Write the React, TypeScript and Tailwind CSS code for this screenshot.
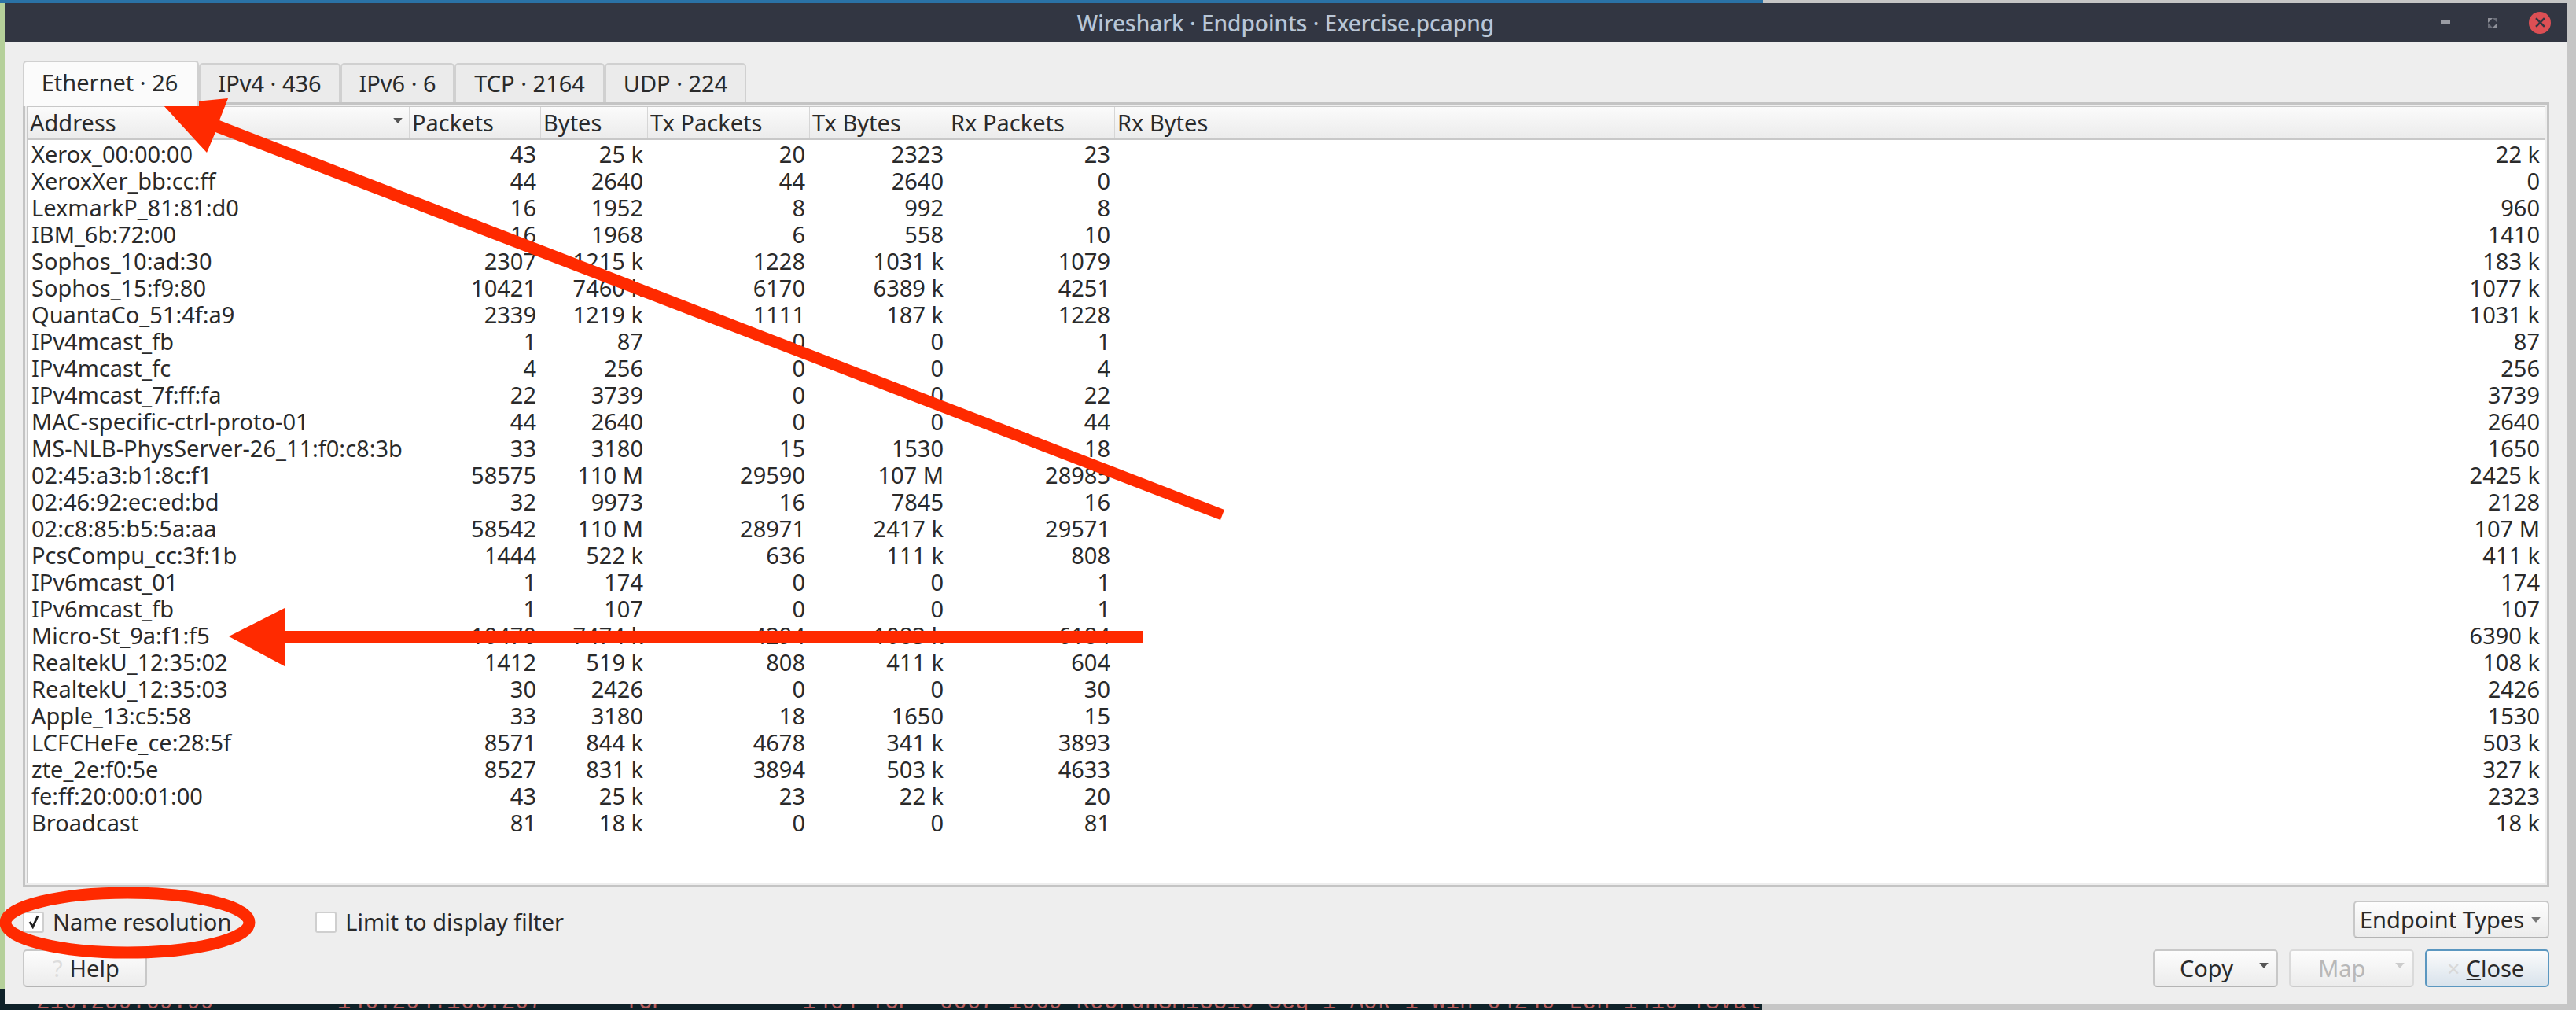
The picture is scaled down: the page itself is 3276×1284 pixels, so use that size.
import React from 'react';

const FONT = "font-['Noto_Sans','Open_Sans',sans-serif]";

type Row = [string, string, string, string, string, string, string];

const rows: Row[] = [
  ['Xerox_00:00:00', '43', '25 k', '20', '2323', '23', '22 k'],
  ['XeroxXer_bb:cc:ff', '44', '2640', '44', '2640', '0', '0'],
  ['LexmarkP_81:81:d0', '16', '1952', '8', '992', '8', '960'],
  ['IBM_6b:72:00', '16', '1968', '6', '558', '10', '1410'],
  ['Sophos_10:ad:30', '2307', '1215 k', '1228', '1031 k', '1079', '183 k'],
  ['Sophos_15:f9:80', '10421', '7460 k', '6170', '6389 k', '4251', '1077 k'],
  ['QuantaCo_51:4f:a9', '2339', '1219 k', '1111', '187 k', '1228', '1031 k'],
  ['IPv4mcast_fb', '1', '87', '0', '0', '1', '87'],
  ['IPv4mcast_fc', '4', '256', '0', '0', '4', '256'],
  ['IPv4mcast_7f:ff:fa', '22', '3739', '0', '0', '22', '3739'],
  ['MAC-specific-ctrl-proto-01', '44', '2640', '0', '0', '44', '2640'],
  ['MS-NLB-PhysServer-26_11:f0:c8:3b', '33', '3180', '15', '1530', '18', '1650'],
  ['02:45:a3:b1:8c:f1', '58575', '110 M', '29590', '107 M', '28985', '2425 k'],
  ['02:46:92:ec:ed:bd', '32', '9973', '16', '7845', '16', '2128'],
  ['02:c8:85:b5:5a:aa', '58542', '110 M', '28971', '2417 k', '29571', '107 M'],
  ['PcsCompu_cc:3f:1b', '1444', '522 k', '636', '111 k', '808', '411 k'],
  ['IPv6mcast_01', '1', '174', '0', '0', '1', '174'],
  ['IPv6mcast_fb', '1', '107', '0', '0', '1', '107'],
  ['Micro-St_9a:f1:f5', '10470', '7474 k', '4294', '1083 k', '6184', '6390 k'],
  ['RealtekU_12:35:02', '1412', '519 k', '808', '411 k', '604', '108 k'],
  ['RealtekU_12:35:03', '30', '2426', '0', '0', '30', '2426'],
  ['Apple_13:c5:58', '33', '3180', '18', '1650', '15', '1530'],
  ['LCFCHeFe_ce:28:5f', '8571', '844 k', '4678', '341 k', '3893', '503 k'],
  ['zte_2e:f0:5e', '8527', '831 k', '3894', '503 k', '4633', '327 k'],
  ['fe:ff:20:00:01:00', '43', '25 k', '23', '22 k', '20', '2323'],
  ['Broadcast', '81', '18 k', '0', '0', '81', '18 k'],
];

const headers = ['Address', 'Packets', 'Bytes', 'Tx Packets', 'Tx Bytes', 'Rx Packets', 'Rx Bytes'];
const COLS = 'grid grid-cols-[486px_167px_136px_206px_176px_212px_1fr]';
const tabs = [
  { label: 'Ethernet · 26', w: 'w-[224px]' },
  { label: 'IPv4 · 436', w: 'w-[180px]' },
  { label: 'IPv6 · 6', w: 'w-[145px]' },
  { label: 'TCP · 2164', w: 'w-[191px]' },
  { label: 'UDP · 224', w: 'w-[180px]' },
];

const Caret = ({ className = '' }: { className?: string }) => (
  <svg viewBox="0 0 10 6" className={`w-[12px] h-[7px] ${className}`} fill="currentColor">
    <path d="M0 0h10L5 6z" />
  </svg>
);

const btn =
  'h-[48px] rounded-[5px] border-2 border-[#c8c8c8] border-b-[#b4b4b4] bg-gradient-to-b from-[#fdfdfd] to-[#ececec] flex items-center';

export default function App() {
  return (
    <div className={`relative w-[3276px] h-[1284px] overflow-hidden bg-[#c6c6c6] text-[29px] leading-[34px] text-[#2a2a2a] ${FONT}`}>
      {/* desktop behind the dialog */}
      <div className="absolute left-0 top-0 w-[2242px] h-[4px] bg-[#2a72a6]" />
      <div className="absolute left-0 top-[4px] w-[6px] h-[1253px] bg-[#b5d09a]" />
      <div className="absolute left-0 top-[1257px] bottom-0 w-[2241px] overflow-hidden bg-[#0f2229] pl-[46px] pt-[1px] whitespace-pre text-[#b85f5f] font-['Liberation_Mono',monospace]">
        {'216.289.69.99         146.204.166.207      TCP          1464 TCP  6667 1669 ReCrdnSM13310 Seq=1 Ack=1 Win=64240 Len=1410 TSval=3099 TSecr=6671 from, AGRT 6c6 1 AGK'}
      </div>

      {/* dialog */}
      <div className="relative left-[6px] top-[4px] w-[3258px] h-[1273px] flex flex-col bg-[#eeeeee]">
        <div className="relative h-[49px] shrink-0 flex items-center justify-center bg-[#323642] text-[#b9c6d6] text-[28px] font-medium">
          Wireshark · Endpoints · Exercise.pcapng
          <div className="absolute right-[20px] top-0 h-full flex items-center">
            <div className="w-[12px] h-[5px] bg-[#9a9ca4]" />
            <svg viewBox="0 0 12 12" className="w-[12px] h-[12px] ml-[48px]" fill="#8f9199">
              <path d="M0 0h6L0 6zM12 12H6l6-6z" />
              <path d="M12 0v6L6 0zM0 12V6l6 6z" fill="#6c6f79" />
            </svg>
            <div className="w-[28px] h-[28px] ml-[40px] rounded-full bg-[#dc4f54] flex items-center justify-center">
              <svg viewBox="0 0 12 12" className="w-[13px] h-[13px]" stroke="#323642" strokeWidth="2.4" fill="none">
                <path d="M1 1l10 10M11 1L1 11" />
              </svg>
            </div>
          </div>
        </div>

        <div className="flex-1 flex flex-col pl-[23px] pr-[22px] pt-[24px]">
          <div className="flex items-end h-[53px] shrink-0">
            {tabs.map((t, i) => (
              <div
                key={t.label}
                className={`${t.w} flex items-center justify-center rounded-t-[5px] border-2 border-b-0 border-[#d0d0d0] ${
                  i === 0 ? 'h-[58px] bg-[#fbfbfb] z-10 -mb-[5px] pb-[5px] pr-[3px]' : 'h-[50px] bg-[#ebebeb]'
                }`}
              >
                {t.label}
              </div>
            ))}
          </div>

          <div className="h-[998px] shrink-0 border-[3px] border-[#c4c4c4] p-[2px] bg-[#eeeeee] flex flex-col">
            <div className="flex-1 border border-[#c8c8c8] bg-white flex flex-col">
              <div className={`${COLS} h-[42px] shrink-0 bg-gradient-to-b from-[#fbfbfb] to-[#ececec] border-b-[3px] border-[#c8c8c8]`}>
                {headers.map((h, i) => (
                  <div key={h} className="relative flex items-center pl-[3px] border-r border-[#d6d6d6] last:border-r-0">
                    {h}
                    {i === 0 && <Caret className="absolute right-[8px] top-[14px] text-[#555555]" />}
                  </div>
                ))}
              </div>
              <div className="pt-[1px]">
                {rows.map((r) => (
                  <div key={r[0]} className={`${COLS} h-[34px]`}>
                    {r.map((c, i) => (
                      <div key={i} className={i === 0 ? 'pl-[5px] whitespace-nowrap' : 'text-right pr-[6px] whitespace-nowrap'}>
                        {c}
                      </div>
                    ))}
                  </div>
                ))}
              </div>
            </div>
          </div>

          <div className="flex items-start justify-between h-[65px] pt-[17px] shrink-0">
            <div className="flex items-center gap-[107px] pt-[10px]">
              <label className="flex items-center gap-[11px]">
                <span className="w-[27px] h-[27px] rounded-[3px] border-2 border-[#cfcfcf] bg-white flex items-center justify-center">
                  <svg viewBox="0 0 14 14" className="w-[18px] h-[18px]" stroke="#222222" strokeWidth="2.2" fill="none">
                    <path d="M3 7l3 5 5-11" />
                  </svg>
                </span>
                Name resolution
              </label>
              <label className="flex items-center gap-[11px]">
                <span className="w-[27px] h-[27px] rounded-[3px] border-2 border-[#cfcfcf] bg-white" />
                Limit to display filter
              </label>
            </div>
            <div className={`${btn} w-[249px] pl-[6px] gap-[9px]`}>
              Endpoint Types
              <Caret className="text-[#777777]" />
            </div>
          </div>

          <div className="flex items-center justify-between shrink-0 pt-[14px]">
            <div className={`${btn} w-[158px] pl-[36px] gap-[9px]`}>
              <span className="text-[#dddddd]">?</span>
              Help
            </div>
            <div className="flex gap-[14px]">
              <div className={`${btn} w-[159px] relative pl-[32px]`}>
                Copy
                <Caret className="absolute right-[10px] top-[15px] text-[#555555]" />
              </div>
              <div className={`${btn} w-[159px] relative pl-[35px] text-[#b8b8b8] border-[#dadada] border-b-[#cccccc]`}>
                Map
                <Caret className="absolute right-[10px] top-[15px] text-[#cccccc]" />
              </div>
              <div className="h-[48px] w-[158px] rounded-[5px] border-2 border-[#5b97c0] bg-gradient-to-b from-[#fbfbfb] to-[#d9e3ec] flex items-center pl-[26px] gap-[8px]">
                <span className="text-[#d8d8d8]">×</span>
                <span><span className="underline">C</span>lose</span>
              </div>
            </div>
          </div>
        </div>
      </div>

      {/* annotations drawn on top of the screenshot */}
      <svg className="absolute left-0 top-0 pointer-events-none" width="3276" height="1284" fill="#ff2a00">
        <path d="M207 133L290 125L279 153L1557 648L1552 661L274 168L263 194Z" />
        <path d="M291 809L362 773V802H1454V817H362V847Z" />
        <ellipse cx="162" cy="1173" rx="155" ry="38" fill="none" stroke="#ff2a00" strokeWidth="15" />
      </svg>
    </div>
  );
}
